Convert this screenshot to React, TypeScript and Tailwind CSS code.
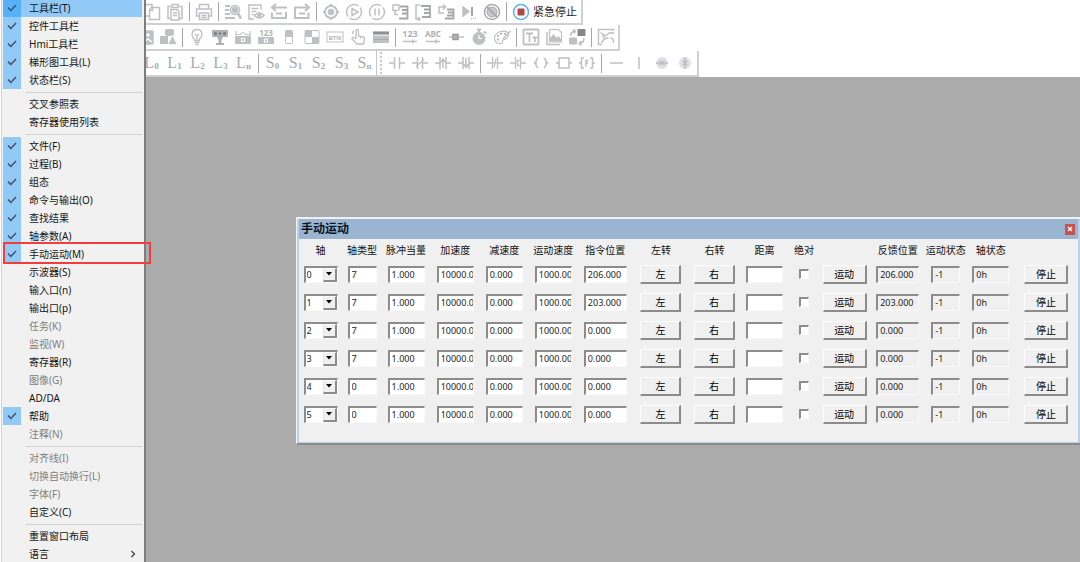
import React, { useState } from "react";

type MenuItem = {
  label: string;
  checked?: boolean;
  disabled?: boolean;
  submenu?: boolean;
};

const menuGroups: MenuItem[][] = [
  [
    { label: "工具栏(T)", checked: true },
    { label: "控件工具栏", checked: true },
    { label: "Hmi工具栏", checked: true },
    { label: "梯形图工具(L)", checked: true },
    { label: "状态栏(S)", checked: true },
  ],
  [{ label: "交叉参照表" }, { label: "寄存器使用列表" }],
  [
    { label: "文件(F)", checked: true },
    { label: "过程(B)", checked: true },
    { label: "组态", checked: true },
    { label: "命令与输出(O)", checked: true },
    { label: "查找结果", checked: true },
    { label: "轴参数(A)", checked: true },
    { label: "手动运动(M)", checked: true },
    { label: "示波器(S)" },
    { label: "输入口(n)" },
    { label: "输出口(p)" },
    { label: "任务(K)", disabled: true },
    { label: "监视(W)", disabled: true },
    { label: "寄存器(R)" },
    { label: "图像(G)", disabled: true },
    { label: "AD/DA" },
    { label: "帮助", checked: true },
    { label: "注释(N)", disabled: true },
  ],
  [
    { label: "对齐线(I)", disabled: true },
    { label: "切换自动换行(L)", disabled: true },
    { label: "字体(F)", disabled: true },
    { label: "自定义(C)" },
  ],
  [{ label: "重置窗口布局" }, { label: "语言", submenu: true }],
];

const axes = [
  { type: "7", position: "206.000" },
  { type: "7", position: "203.000" },
  { type: "7", position: "0.000" },
  { type: "7", position: "0.000" },
  { type: "0", position: "0.000" },
  { type: "0", position: "0.000" },
];

const headers = [
  "轴",
  "轴类型",
  "脉冲当量",
  "加速度",
  "减速度",
  "运动速度",
  "指令位置",
  "左转",
  "右转",
  "距离",
  "绝对",
  "",
  "反馈位置",
  "运动状态",
  "轴状态",
  "",
];

const columnWidths = [43, 40, 48, 50, 48, 50, 54, 57, 50, 50, 29, 52, 54, 42, 48, 63];

/* Toolbar pieces */

const Tool = ({ name, children }: { name: string; children: React.ReactNode }) => (
  <button
    type="button"
    title={name}
    aria-label={name}
    className="flex h-5 w-[23px] shrink-0 items-center justify-center"
  >
    <svg
      viewBox="0 0 18 18"
      className="h-[18px] w-[18px] fill-none stroke-[#bfc0c4]"
      strokeWidth="1.5"
    >
      {children}
    </svg>
  </button>
);

const Divider = () => (
  <span className="flex w-[6px] shrink-0 justify-center">
    <span className="h-[19px] w-px bg-[#a6a6a6]" />
  </span>
);

const Letter = ({ main, sub }: { main: string; sub: string }) => (
  <button
    type="button"
    className="flex h-5 w-[23px] shrink-0 items-center justify-center font-['Liberation_Serif',serif] text-base leading-5 text-[#a9aaaf]"
  >
    {main}
    <span className="pt-[5px] text-[9px] font-bold">{sub}</span>
  </button>
);

const S = "#bfc0c4";

const MainTools = () => (
  <div className="flex h-[25px] w-fit items-center border-r-2 border-b-2 border-[#d0d0d0] bg-white pr-1 pl-[140px]">
    <Tool name="复制">
      <path d="M7 13H1.500V3.500l2-2H9V5M6.500 6.500l2-2h8v12h-10zM6.500 7.500h3v-3" />
    </Tool>
    <Tool name="粘贴">
      <path d="M5 15.500H2v-12h3M13 3.500h3v12h-3M6 1.500h6v3H6zM5 6.500h6l2 2.500v8H5zM7 10h4M7 12.500h4" />
    </Tool>
    <Divider />
    <Tool name="打印">
      <path d="M4.500 6V1.500h9V6M4 13H1.500V6h15v7H14M4.500 10h9v6.500h-9zM6.500 12.500h5M6.500 14.500h5" />
    </Tool>
    <Divider />
    <Tool name="查找">
      <path d="M1 3h5M1 7h4M1 11h5M1 15h10" strokeWidth="2" />
      <circle cx="11" cy="7" r="4.500" />
      <circle cx="11" cy="7" r="2.500" fill={S} />
      <path d="M14 10.500l3 5" strokeWidth="2.500" />
    </Tool>
    <Tool name="查看">
      <path d="M14 6.500V2H2v14h5M4.500 5.500h7M4.500 8.500h5M4.500 11.500h2" />
      <path d="M7.500 12.500q4.500-5.500 9.500 0q-5 5.500-9.500 0z" />
      <circle cx="12.300" cy="12.500" r="1.500" fill={S} />
    </Tool>
    <Tool name="撤销">
      <path d="M3 4.500h14M6 1L2 4.500L6 8M2 9.500V15h14V9M6 10.500h6" strokeWidth="2" />
    </Tool>
    <Tool name="重做">
      <path d="M15 4.500H2V15h13.500V9.500M6 10.500h6M12 1l4 3.500L12 8" strokeWidth="2" />
    </Tool>
    <Divider />
    <Tool name="定位">
      <circle cx="9" cy="9" r="6" strokeWidth="2" />
      <circle cx="9" cy="9" r="2.500" fill={S} />
      <path d="M9 1v3M9 14v3M1 9h3M14 9h3" strokeWidth="2" />
    </Tool>
    <Tool name="运行">
      <path d="M3 13.500A7.500 7.500 0 0 1 13.500 3M15 4.500A7.500 7.500 0 0 1 4.500 15" />
      <path d="M7 5.500l6 3.500l-6 3.500z" />
    </Tool>
    <Tool name="暂停">
      <path d="M3 13.500A7.500 7.500 0 0 1 13.500 3M15 4.500A7.500 7.500 0 0 1 4.500 15M7 5.500v7M11 5.500v7" />
    </Tool>
    <Tool name="单步进入">
      <path d="M7.500 7.500H2V2h6v5M4 7.500v4h3" />
      <path d="M9 3.500h8M11 7h6M11 10.500h6M8 15.500h8.500V3" stroke="#a5a6a9" strokeWidth="1.800" />
    </Tool>
    <Tool name="单步跳过">
      <path d="M6 2H2v14h4M4 14l2 2l-2 2" />
      <path d="M7 3h9v11H8M10 6.500h6M10 10h6" stroke="#a5a6a9" strokeWidth="1.800" />
    </Tool>
    <Tool name="单步跳出">
      <path d="M7 10H2V4h6M6 1.500L8.500 4L6 6.500" />
      <path d="M10 6.500h6.500v9H8M11 9.500h5M10 12.500h6" stroke="#a5a6a9" strokeWidth="1.800" />
    </Tool>
    <Tool name="运行到光标">
      <path d="M3 4l6 4.500L3 13z" fill={S} />
      <path d="M12 4v9" stroke="#a5a6a9" strokeWidth="2" />
      <path d="M11 15.500h6" strokeDasharray="1 1" />
    </Tool>
    <Tool name="禁用">
      <g className="stroke-[#aaabad]">
        <circle cx="9" cy="9" r="7.500" />
        <circle cx="9" cy="9" r="5" fill="#c7c8ca" strokeWidth="1" />
        <path d="M4 4l10 10" strokeWidth="2" />
      </g>
    </Tool>
    <Divider />
    <button
      type="button"
      className="flex h-5 shrink-0 items-center gap-[3px] pl-[3px] text-[11px] leading-5 whitespace-nowrap text-[#1e1e1e]"
    >
      <svg viewBox="0 0 18 18" className="h-[18px] w-[18px] fill-none">
        <circle cx="9" cy="9" r="7.500" stroke="#5ab0f4" strokeWidth="1.500" />
        <rect x="5.500" y="5.500" width="7" height="7" rx="1" fill="#b24444" />
      </svg>
      紧急停止
    </button>
  </div>
);

const HmiTools = () => (
  <div className="flex h-[26px] w-fit items-center border-r-2 border-b-2 border-[#d0d0d0] bg-white pr-px pl-[133px]">
    <Tool name="图片">
      <rect x="2" y="3" width="15" height="13" rx="1" fill={S} />
      <circle cx="12" cy="7" r="2.500" fill="#fff" />
      <path d="M8 14l4-3l4 3" stroke="#fff" />
    </Tool>
    <Tool name="形状">
      <g fill={S} stroke="none">
        <rect x="6" y="1" width="9" height="7" rx="2" />
        <rect x="1" y="8" width="8" height="8" />
        <path d="M13.500 7L18 16.500H9z" stroke="#fff" strokeWidth="0.700" />
      </g>
    </Tool>
    <Divider />
    <Tool name="位状态指示灯">
      <path
        d="M6.500 12.500v-1.500C2.500 8 3.500 1.500 9 1.500S15.500 8 11.500 11v1.500zM6.500 14.500h5M7.500 16.500h3M7 6l2 2l2-2M9 8v4"
        strokeWidth="1.300"
      />
    </Tool>
    <Tool name="多状态指示灯">
      <g stroke="none" fill="#b0b1b4">
        <rect x="1" y="2" width="16" height="7" rx="1" />
        <path d="M6 9h6l-1.500 3v3H13v2H5v-2h2.500v-3z" />
      </g>
      <g stroke="none" fill="#77787a">
        <circle cx="4.500" cy="5.500" r="1.500" />
        <circle cx="9" cy="5.500" r="1.200" />
        <circle cx="13.500" cy="5.500" r="1.500" />
      </g>
    </Tool>
    <Tool name="位状态设置">
      <rect x="1" y="8" width="16" height="8" rx="1" fill={S} stroke="none" />
      <path d="M2 3v5M16 3v5M6 7q3-5 6 0M3 6.500h3M12 6.500h3" strokeWidth="1.200" />
      <rect x="7.500" y="10.500" width="3" height="3" stroke="#fff" strokeWidth="1" />
    </Tool>
    <Tool name="多状态设置">
      <text
        x="9"
        y="8"
        textAnchor="middle"
        className="fill-[#b4b5b8] stroke-none font-['Noto_Sans',sans-serif] text-[8px] font-bold"
      >
        123
      </text>
      <rect x="1" y="9" width="16" height="7" rx="1" fill={S} stroke="none" />
      <rect x="7.500" y="11" width="3" height="3" stroke="#fff" strokeWidth="1" />
    </Tool>
    <Tool name="位状态切换开关">
      <rect x="5.500" y="2.500" width="7" height="13" rx="1" strokeWidth="1" />
      <rect x="5.500" y="2.500" width="7" height="6.500" fill={S} stroke="none" />
    </Tool>
    <Tool name="多状态切换开关">
      <rect x="2" y="2.500" width="14" height="13" rx="1" strokeWidth="1" />
      <rect x="2" y="2.500" width="7" height="6.500" fill={S} stroke="none" />
      <rect x="9" y="9" width="7" height="6.500" fill={S} stroke="none" />
    </Tool>
    <Tool name="功能键">
      <rect x="1" y="4" width="16" height="10" strokeWidth="1" />
      <text
        x="9"
        y="11.500"
        textAnchor="middle"
        className="fill-[#b4b5b8] stroke-none font-['Noto_Sans',sans-serif] text-[6px] font-bold"
      >
        BTN
      </text>
    </Tool>
    <Tool name="物理按键">
      <path
        d="M7 11V3q0-1.500 1.200-1.500T9.500 3v5l4.500 1q2 .5 1.500 2.500l-1 4.500H8l-5-5q0-2 2-1.500l2 1.500M11.500 8.500v2M3.500 6A4.500 4.500 0 0 1 5 2.500"
        strokeWidth="1.300"
      />
    </Tool>
    <Tool name="列表">
      <rect x="1" y="3" width="16" height="12" fill={S} stroke="none" />
      <path d="M1 5h16" stroke="#8f9092" strokeWidth="2" />
      <path d="M1 7.500h16" stroke="#e2e2e4" strokeWidth="1" />
      <path d="M2 11.500h14" stroke="#aaabad" strokeWidth="1" />
    </Tool>
    <Divider />
    <Tool name="数值显示">
      <text
        x="9"
        y="9"
        textAnchor="middle"
        className="fill-[#b0b1b4] stroke-none font-['Noto_Sans',sans-serif] text-[9px] font-bold"
      >
        123
      </text>
      <path d="M2 13.500h14M12 11.500v4" strokeWidth="1.500" />
    </Tool>
    <Tool name="字符显示">
      <text
        x="9"
        y="9"
        textAnchor="middle"
        className="fill-[#b0b1b4] stroke-none font-['Noto_Sans',sans-serif] text-[8px] font-bold"
      >
        ABC
      </text>
      <path d="M2 13.500h14M12 11.500v4" strokeWidth="1.500" />
    </Tool>
    <Tool name="滑块">
      <path d="M2 9h15" />
      <rect x="6" y="6.500" width="5" height="5" fill="#b4b5b8" stroke="#999a9c" />
    </Tool>
    <Tool name="定时器">
      <circle cx="9" cy="10.500" r="6.500" fill={S} stroke="none" />
      <path d="M7 1.500h4M9 2v3M14 3.500l2 2" strokeWidth="2" />
      <path d="M9 7v3.500h3" stroke="#fff" strokeWidth="1.200" />
    </Tool>
    <Tool name="调色板">
      <path
        d="M15.500 5C11 1 2 4 1.500 10q0 6 7 5.500c2-.5 0-3 2-4q5 0 5-6.500z"
        strokeWidth="1.200"
      />
      <path d="M17.500 3L10 11" strokeWidth="1.500" />
      <g fill={S} stroke="none">
        <circle cx="5" cy="8" r="1.200" />
        <circle cx="8" cy="5.800" r="1.200" />
        <circle cx="5" cy="11.500" r="1.200" />
        <circle cx="12" cy="6" r="1.200" />
      </g>
    </Tool>
    <Divider />
    <Tool name="文本">
      <rect x="1.500" y="1.500" width="15" height="15" rx="1" strokeWidth="1.800" />
      <path d="M4 5.500h7M7.500 5.500V14M10.500 9.500h5M13 9.500V14" strokeWidth="1.800" />
    </Tool>
    <Tool name="图库">
      <path d="M4.500 14V1.500h9l3 3V14z" strokeWidth="1.200" />
      <path d="M5 13.500V10l3.500-4l3 4l2-2l3 4v1.500z" fill={S} stroke="none" />
      <path d="M2 4v12.500h13" strokeWidth="1.500" />
    </Tool>
    <Tool name="切换窗口">
      <rect x="9.500" y="1" width="8" height="7" rx="1" fill="#858688" stroke="none" />
      <rect x="1" y="9.500" width="8" height="7" rx="1" fill={S} stroke="none" />
      <path d="M2.500 8q0-4 4.500-5M5 1.500L7.500 3L6 5.500M16 10q0 5-4.500 5.500M13.500 13L11 15.500l2.500 1.500" />
    </Tool>
    <Divider />
    <Tool name="动作">
      <path
        d="M16.500 3V1.500H1.500v15H5M3.500 4.500l5 3.500l3.500-3h5M5.500 7l2 3.500L4.500 15M8 11l3.500-1.500M13.500 10q3 0 3 5"
        strokeWidth="1.400"
      />
    </Tool>
  </div>
);

const LadderTools = () => (
  <div className="flex h-[26px] w-fit items-center border-r-2 border-b-2 border-[#d0d0d0] bg-white pr-px pl-[140px]">
    {["0", "1", "2", "3", "n"].map((n) => (
      <Letter key={n} main="L" sub={n} />
    ))}
    <Divider />
    {["0", "1", "2", "3", "n"].map((n) => (
      <Letter key={n} main="S" sub={n} />
    ))}
    <span className="mr-[3px] h-[26px] w-px shrink-0 bg-[#c8c8c8]" />
    <span className="mr-[3px] h-[22px] shrink-0 border-l-2 border-dotted border-[#c8c8c8]" />
    <Tool name="常开触点">
      <path d="M1 9h5.500M6.500 3v12M11.500 3v12M11.500 9H17" />
    </Tool>
    <Tool name="常闭触点">
      <path d="M1 9h5.500M6.500 3v12M11.500 3v12M11.500 9H17M5 12.500L13 5.500" />
    </Tool>
    <Tool name="上升沿触点">
      <path d="M1 9h4.500M6 3v12M12 3v12M12.500 9H17M9 14V5M7 8L9 5l2 3" />
    </Tool>
    <Tool name="下降沿触点">
      <path d="M1 9h4.500M6 3v12M12 3v12M12.500 9H17M9 4v9M7 10.500l2 3l2-3" />
    </Tool>
    <Divider />
    <Tool name="函数触点">
      <path d="M1 9h5M6.500 3v12M11.500 3v12M12 9H17M8 13L10 5M7.500 9h3" strokeWidth="1.300" />
    </Tool>
    <Tool name="比较触点">
      <path d="M1 9h5M6.500 3v12M11.500 3v12M12 9H17M10.500 6.500H8.500v5h2" strokeWidth="1.300" />
    </Tool>
    <Tool name="线圈">
      <path d="M6 4L4 6.500v5L6 14M12 4l2 2.500v5L12 14M1.500 9H4M14 9h2.500" />
    </Tool>
    <Tool name="功能块">
      <rect x="4" y="4" width="10" height="10" />
      <path d="M1 9h3M14 9h3" />
    </Tool>
    <Tool name="函数块">
      <path d="M6 4H3.500v10H6M12 4h2.500v10H12M1 9h2.500M14.500 9H17M8 12.500v-6h2.500M8 9h2" />
    </Tool>
    <Divider />
    <Tool name="横线">
      <path d="M3 9h13" />
    </Tool>
    <Tool name="竖线">
      <path d="M9 3v12" />
    </Tool>
    <Tool name="删除横线">
      <circle cx="9" cy="9" r="6" fill="#e2e2e6" stroke="none" />
      <path d="M3 9h12M6.500 6.500l5 5M11.500 6.500l-5 5" />
    </Tool>
    <Tool name="删除竖线">
      <circle cx="9" cy="9" r="6" fill="#e2e2e6" stroke="none" />
      <path d="M9 3v12M6.500 6.500l5 5M11.500 6.500l-5 5" />
    </Tool>
  </div>
);

/* View menu */

const ViewMenu = () => (
  <div
    role="menu"
    className="absolute -top-px left-px w-[145px] border-r-2 border-l border-r-[#7d7d7d] border-l-[#d0d0d0] bg-[#f1f1f1] pr-[2px] pb-2 pl-px text-[10px] text-[#151515] shadow-[-1px_0_0_#ffffff]"
  >
    {menuGroups.map((group, g) => (
      <div key={g} role="group">
        {g > 0 && (
          <div className="flex h-[6px] items-center pl-[23px]">
            <div className="h-px w-full bg-[#d2d2d2]" />
          </div>
        )}
        {group.map((item, i) => {
          const active = g === 0 && i === 0;
          return (
            <button
              key={item.label}
              type="button"
              role={item.submenu ? "menuitem" : "menuitemcheckbox"}
              aria-checked={item.submenu ? undefined : !!item.checked}
              disabled={item.disabled}
              className={`relative flex h-[18px] w-full items-center text-left leading-[18px] whitespace-nowrap disabled:text-[#808080] ${
                active ? "bg-[#91c9f7]" : ""
              }`}
            >
              <span
                className={`mr-2 flex h-[18px] w-[18px] shrink-0 items-center justify-center ${
                  item.checked ? (active ? "bg-[#56b0fa]" : "bg-[#91c9f7]") : ""
                }`}
              >
                {item.checked && (
                  <svg viewBox="0 0 10 8" className="h-2 w-[10px] fill-none stroke-[#3b5068]">
                    <path d="M1 3.500l2.800 3L9 1" strokeWidth="1.400" />
                  </svg>
                )}
              </span>
              <span className="grow">{item.label}</span>
              {item.submenu && (
                <svg viewBox="0 0 6 8" className="mr-[6px] h-2 w-[6px] fill-none stroke-[#333]">
                  <path d="M1.500 1l3 3l-3 3" strokeWidth="1.100" />
                </svg>
              )}
              {item.label === "手动运动(M)" && (
                <span className="pointer-events-none absolute -top-[3px] left-0 z-10 h-[22px] w-[148px] border-2 border-[#f43c3c]" />
              )}
            </button>
          );
        })}
      </div>
    ))}
  </div>
);

/* Manual motion window */

const fieldBase =
  "mx-auto block h-[17px] border-t-2 border-r border-b border-l-2 border-t-[#8c8c8c] border-r-[#fafafa] border-b-[#fafafa] border-l-[#8c8c8c] pl-[2px] text-[9px] leading-[14px] text-[#222]";

const Field = ({
  label,
  value,
  width,
  readOnly,
}: {
  label: string;
  value: string;
  width: string;
  readOnly?: boolean;
}) => (
  <input
    type="text"
    aria-label={label}
    defaultValue={value}
    readOnly={readOnly}
    className={`${fieldBase} ${width} ${readOnly ? "bg-[#f0f0f0]" : "bg-white"}`}
  />
);

const PushButton = ({ children, width }: { children: string; width: string }) => (
  <button
    type="button"
    className={`mx-auto block h-[19px] border-t border-r-2 border-b-2 border-l border-t-[#fdfdfd] border-r-[#8c8c8c] border-b-[#8c8c8c] border-l-[#fdfdfd] bg-[#f0f0f0] text-[10px] leading-4 text-black ${width}`}
  >
    {children}
  </button>
);

const AxisRow = ({ index }: { index: number }) => {
  const [axis, setAxis] = useState(index);
  const { type, position } = axes[index];

  return (
    <tr className="h-7">
      <td>
        <div className="relative mx-auto w-[34px]">
          <select
            aria-label="轴"
            value={axis}
            onChange={(e) => setAxis(Number(e.target.value))}
            className="block h-[17px] w-full appearance-none border-t-2 border-r border-b border-l-2 border-t-[#8c8c8c] border-r-[#fafafa] border-b-[#fafafa] border-l-[#8c8c8c] bg-white pl-px text-[9px] leading-[14px] text-[#222]"
          >
            {axes.map((_, n) => (
              <option key={n} value={n}>
                {n}
              </option>
            ))}
          </select>
          <span className="pointer-events-none absolute top-[2px] right-px flex h-[14px] w-[14px] items-center justify-center border-t border-r-2 border-b-2 border-l border-t-[#fdfdfd] border-r-[#8c8c8c] border-b-[#8c8c8c] border-l-[#e3e3e3] bg-[#f0f0f0]">
            <svg viewBox="0 0 6 4" className="h-1 w-[6px] fill-black">
              <path d="M0 0h6L3 3.500z" />
            </svg>
          </span>
        </div>
      </td>
      <td>
        <Field label="轴类型" value={type} width="w-[29px]" />
      </td>
      <td>
        <Field label="脉冲当量" value="1.000" width="w-[37px]" />
      </td>
      <td>
        <Field label="加速度" value="10000.000" width="w-[37px]" />
      </td>
      <td>
        <Field label="减速度" value="0.000" width="w-[37px]" />
      </td>
      <td>
        <Field label="运动速度" value="1000.000" width="w-[37px]" />
      </td>
      <td>
        <Field label="指令位置" value={position} width="w-[43px]" />
      </td>
      <td>
        <PushButton width="w-[41px]">左</PushButton>
      </td>
      <td>
        <PushButton width="w-[41px]">右</PushButton>
      </td>
      <td>
        <Field label="距离" value="" width="w-[37px]" />
      </td>
      <td>
        <input
          type="checkbox"
          aria-label="绝对"
          className="mx-auto block h-[10px] w-[10px] appearance-none border-t-2 border-r border-b border-l-2 border-t-[#8c8c8c] border-r-[#fafafa] border-b-[#fafafa] border-l-[#8c8c8c] bg-white checked:bg-[#333]"
        />
      </td>
      <td>
        <PushButton width="w-[44px]">运动</PushButton>
      </td>
      <td>
        <Field label="反馈位置" value={position} width="w-[43px]" readOnly />
      </td>
      <td>
        <Field label="运动状态" value="-1" width="w-[29px]" readOnly />
      </td>
      <td>
        <Field label="轴状态" value="0h" width="w-[37px]" readOnly />
      </td>
      <td>
        <PushButton width="w-[44px]">停止</PushButton>
      </td>
    </tr>
  );
};

const MotionWindow = () => (
  <section
    aria-label="手动运动"
    className="absolute top-[217px] right-0 left-[296px] border-t-2 border-b-2 border-l border-t-[#eef2f6] border-b-[#8b8b8b] border-l-[#f4f4f4] bg-[#f0f0f0]"
  >
    <div className="border-r-2 border-b border-l-2 border-[#b9d1ea]">
      <header className="flex h-5 items-center justify-between bg-[#9ab4d1] pr-[3px] pl-[2px]">
        <h1 className="text-xs leading-5 font-bold text-[#0d1520]">手动运动</h1>
        <button
          type="button"
          aria-label="关闭"
          className="flex h-[11px] w-[10px] items-center justify-center bg-[#c75050]"
        >
          <svg viewBox="0 0 6 6" className="h-[6px] w-[6px] fill-none stroke-white">
            <path d="M1 1l4 4M5 1l-4 4" strokeWidth="1.400" />
          </svg>
        </button>
      </header>
      <table className="mb-[14px] w-full table-fixed border-collapse">
        <colgroup>
          {columnWidths.map((w, i) => (
            <col key={i} style={{ width: w }} />
          ))}
        </colgroup>
        <thead>
          <tr className="h-[21px]">
            {headers.map((h, i) => (
              <th
                key={i}
                scope="col"
                className="text-[10px] leading-4 font-normal whitespace-nowrap text-[#111]"
              >
                {h}
              </th>
            ))}
          </tr>
        </thead>
        <tbody>
          {axes.map((_, i) => (
            <AxisRow key={i} index={i} />
          ))}
        </tbody>
      </table>
    </div>
  </section>
);

const App: React.FC = () => {
  return (
    <div className="relative min-h-screen overflow-hidden bg-[#ababab] font-['Noto_Sans','Noto_Sans_CJK_SC',sans-serif]">
      <div role="toolbar" className="overflow-hidden bg-white">
        <MainTools />
        <HmiTools />
        <LadderTools />
      </div>
      <main>
        <MotionWindow />
      </main>
      <ViewMenu />
    </div>
  );
};

export default App;
